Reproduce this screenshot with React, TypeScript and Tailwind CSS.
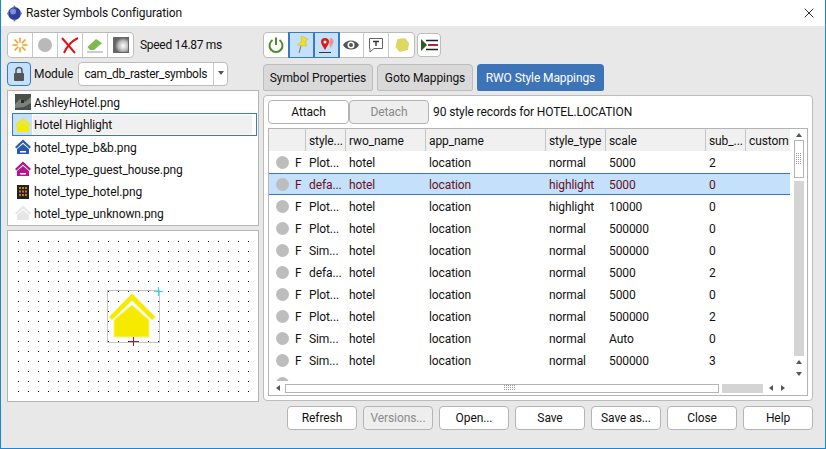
import { X } from "lucide-react";

const rows = [
  ["Plot...", "normal", "5000", "2"],
  ["defa...", "highlight", "5000", "0"],
  ["Plot...", "highlight", "10000", "0"],
  ["Plot...", "normal", "500000", "0"],
  ["Sim...", "normal", "500000", "0"],
  ["defa...", "normal", "5000", "2"],
  ["Plot...", "normal", "5000", "0"],
  ["Plot...", "normal", "500000", "2"],
  ["Sim...", "normal", "Auto", "0"],
  ["Sim...", "normal", "500000", "3"],
];

const columns = [
  { label: "", w: "w-[37px]" },
  { label: "style...", w: "w-[40px]" },
  { label: "rwo_name", w: "w-[80px]" },
  { label: "app_name", w: "w-[120px]" },
  { label: "style_type", w: "w-[60px]" },
  { label: "scale", w: "w-[100px]" },
  { label: "sub_...", w: "w-[40px]" },
  { label: "custom", w: "w-[43px]" },
];

function House({ body, inner }: { body: string; inner?: string }) {
  return (
    <svg width="18" height="18" viewBox="0 0 18 18">
      <path d="M9 1.500 L17 9 L15.500 10.500 L9 4.500 L2.500 10.500 L1 9 Z" fill={body} />
      <path d="M9 6 L15 11 V16 H3 V11 Z" fill={body} />
      {inner && <rect x="6" y="13" width="6" height="1.500" fill={inner} />}
    </svg>
  );
}

function ListRow({ icon, label, selected }: { icon: React.ReactNode; label: string; selected?: boolean }) {
  return (
    <div
      className={
        selected
          ? "flex h-[23px] items-center border border-[#3a78c2]"
          : "flex h-[22px] items-center border border-transparent"
      }
    >
      <div className={selected ? "flex h-full w-[19px] items-center justify-center bg-[#c4e0fa]" : "flex h-full w-[19px] items-center justify-center"}>
        {icon}
      </div>
      <div className={selected ? "ml-[1px] mr-[4px] flex h-[19px] flex-1 items-center bg-[#f0f0f0] pl-[1px]" : "ml-[1px] pl-[1px] pt-[1px]"}>{label}</div>
    </div>
  );
}

function ToolButton({ children, active }: { children: React.ReactNode; active?: boolean }) {
  return (
    <div
      className={
        active
          ? "flex h-full w-[25px] items-center justify-center border-x border-[#3a78c2] bg-[#c4e0fa] outline outline-[#3a78c2]"
          : "flex h-full w-[25px] items-center justify-center border-r border-[#c8c8c8] last:border-r-0"
      }
    >
      {children}
    </div>
  );
}

function FooterButton({ label, disabled }: { label: string; disabled?: boolean }) {
  return (
    <div
      className={
        disabled
          ? "flex h-[24px] w-[70px] items-center justify-center rounded-[4px] border border-[#b4b4b4] bg-[#eeeeee] text-[#8a8a8a]"
          : "flex h-[24px] w-[70px] items-center justify-center rounded-[4px] border border-[#b4b4b4] bg-white"
      }
    >
      {label}
    </div>
  );
}

function Arrow({ dir }: { dir: "up" | "down" | "left" | "right" }) {
  const d = {
    up: "M0 4 L3 0 L6 4 Z",
    down: "M0 0 L6 0 L3 4 Z",
    left: "M4 0 V6 L0 3 Z",
    right: "M0 0 V6 L4 3 Z",
  }[dir];
  return (
    <svg width="6" height="6" viewBox="0 0 6 6">
      <path d={d} fill="#555" />
    </svg>
  );
}

function Grip({ cols, rows: r }: { cols: number; rows: number }) {
  const dots = [];
  for (let x = 0; x < cols; x++) for (let y = 0; y < r; y++) dots.push(<rect key={x + "-" + y} x={x * 2} y={y * 2} width="1" height="1" fill="#9a9a9a" />);
  return (
    <svg width={cols * 2} height={r * 2}>
      {dots}
    </svg>
  );
}

function Preview() {
  const dots = [];
  for (let x = 18; x < 258; x += 10) for (let y = 241; y < 400; y += 10) dots.push(<rect key={x + "-" + y} x={x} y={y} width="1" height="1" fill="#000" />);
  return (
    <svg className="block" width="250" height="170" viewBox="8 231 250 170">
      {dots}
      <rect x="107.5" y="290.5" width="52" height="52" fill="none" stroke="#c4c4c4" />
      <path d="M132 293.5 L155.5 317 L152 320 L132 300.5 L112 320 L109 317 Z" fill="#f5ea00" />
      <path d="M132 305 L149 320 V337 H114 V320 Z" fill="#f5ea00" stroke="#faf27a" />
      <path d="M154 291.5 H163 M158.500 287 V296" stroke="#22dfe8" strokeWidth="1" />
      <path d="M129 341.5 H139 M133.500 337 V346" stroke="#a01c1c" strokeWidth="1" />
    </svg>
  );
}

export default function App() {
  return (
    <div className="flex h-[449px] w-[826px] flex-col overflow-hidden border-x border-b border-[#1a86d9] bg-[#e8e8e8] font-['Roboto',sans-serif] text-[12px] leading-none tracking-[-0.1px] text-[#111]">
      <div className="flex h-[26px] shrink-0 items-center bg-white pl-[5px] pr-[8px]">
        <svg width="17" height="17" viewBox="0 0 17 17">
          <circle cx="8.500" cy="8.500" r="6.500" fill="#2d3f9a" />
          <circle cx="7" cy="6.500" r="3" fill="#7d8ee0" />
          <circle cx="8.500" cy="1.500" r="1" fill="#777" />
          <circle cx="15" cy="8.500" r="1" fill="#777" />
          <circle cx="2" cy="8.500" r="1" fill="#777" />
          <circle cx="8.500" cy="15.500" r="1" fill="#777" />
        </svg>
        <span className="ml-[3px]">Raster Symbols Configuration</span>
        <X className="ml-auto" size={16} strokeWidth={1.3} />
      </div>

      <div className="flex flex-1 gap-[4px] pl-[6px] pr-[12px] pt-[6px]">
        <div className="flex w-[252px] flex-col">
          <div className="flex h-[26px] items-center">
            <div className="flex h-full items-center rounded-[4px] border border-[#bcbcbc] bg-white">
              <ToolButton>
                <svg width="16" height="16" viewBox="0 0 16 16">
                  <path d="M8 0.500 V15.500 M0.500 8 H15.500 M2.500 2.500 L13.500 13.500 M13.500 2.500 L2.500 13.500" stroke="#f59a23" strokeWidth="1.500" />
                  <circle cx="8" cy="8" r="2.500" fill="#fff" />
                </svg>
              </ToolButton>
              <ToolButton>
                <div className="h-[14px] w-[14px] rounded-full bg-[#b9b9b9]" />
              </ToolButton>
              <ToolButton>
                <svg width="20" height="20" viewBox="0 0 20 20">
                  <path d="M2 3 L15 18 M18 3 C12 6 7 11 4 18" stroke="#d9161c" strokeWidth="2" fill="none" />
                </svg>
              </ToolButton>
              <ToolButton>
                <svg width="18" height="18" viewBox="0 0 18 18">
                  <path d="M1.500 11 L10 3 L16 7 L8 14 H4 Z" fill="#7dbb4f" />
                  <path d="M1 16 H17" stroke="#999" />
                </svg>
              </ToolButton>
              <ToolButton>
                <svg width="16" height="16" viewBox="0 0 16 16">
                  <defs>
                    <radialGradient id="fade" cx="0.65" cy="0.55" r="0.55">
                      <stop offset="0" stopColor="#fff" />
                      <stop offset="0.6" stopColor="#bbb" />
                      <stop offset="1" stopColor="#666" />
                    </radialGradient>
                  </defs>
                  <rect x="0.500" y="0.500" width="15" height="15" fill="url(#fade)" stroke="#666" />
                </svg>
              </ToolButton>
            </div>
            <span className="ml-[6px] tracking-[-0.3px]">Speed 14.87 ms</span>
          </div>
          <div className="mt-[4px] flex h-[24px] items-center">
            <div className="flex h-full w-[24px] items-center justify-center rounded-[4px] border border-[#3a78c2] bg-[#c4e0fa]">
              <svg width="14" height="16" viewBox="0 0 14 16">
                <path d="M4 7 V4.500 a3 3 0 0 1 6 0 V7" fill="none" stroke="#555" strokeWidth="1.500" />
                <rect x="2" y="7" width="10" height="8" rx="1" fill="#555" />
              </svg>
            </div>
            <span className="ml-[3px]">Module</span>
            <div className="ml-[5px] flex h-full w-[150px] items-center rounded-[4px] border border-[#bcbcbc] bg-white">
              <span className="flex-1 pl-[5px] tracking-[-0.3px]">cam_db_raster_symbols</span>
              <div className="flex h-full w-[14px] items-center justify-center border-l border-[#c8c8c8]">
                <Arrow dir="down" />
              </div>
            </div>
          </div>
          <div className="mt-[4px] h-[136px] border border-[#b4b4b4] bg-white pl-[4px] pr-[1px]">
            <ListRow
              label="AshleyHotel.png"
              icon={
                <svg width="16" height="16" viewBox="0 0 16 16">
                  <rect width="16" height="16" fill="#4a4f48" />
                  <path d="M0 10 L5 5 L10 8 L16 3 V9 L9 13 L0 14 Z" fill="#7c8279" />
                  <rect x="6" y="6" width="3" height="3" fill="#2a2a2a" />
                </svg>
              }
            />
            <ListRow label="Hotel Highlight" selected icon={<House body="#f5ea00" />} />
            <ListRow label="hotel_type_b&b.png" icon={<House body="#2a5bab" inner="#fff" />} />
            <ListRow label="hotel_type_guest_house.png" icon={<House body="#b5128f" inner="#fff" />} />
            <ListRow
              label="hotel_type_hotel.png"
              icon={
                <svg width="14" height="16" viewBox="0 0 14 16">
                  <rect x="1" y="2" width="12" height="14" fill="#222" />
                  <path d="M3 4 h2 v2 h-2 z M6 4 h2 v2 h-2 z M9 4 h2 v2 h-2 z M3 7.500 h2 v2 h-2 z M6 7.500 h2 v2 h-2 z M9 7.500 h2 v2 h-2 z M3 11 h2 v2 h-2 z M6 11 h2 v2 h-2 z M9 11 h2 v2 h-2 z" fill="#c8761a" />
                </svg>
              }
            />
            <ListRow label="hotel_type_unknown.png" icon={<House body="#e6e6e6" />} />
          </div>
          <div className="mt-[4px] h-[172px] border border-[#b4b4b4] bg-white">
            <Preview />
          </div>
        </div>

        <div className="flex w-[550px] flex-col">
          <div className="flex h-[26px] items-center gap-[2px]">
            <div className="flex h-full items-center rounded-[4px] border border-[#bcbcbc] bg-white">
              <ToolButton>
                <svg width="18" height="18" viewBox="0 0 18 18">
                  <path d="M5.500 4 A6.500 6.500 0 1 0 12.500 4 M9 1.500 V9" fill="none" stroke="#4c8a2e" strokeWidth="2" />
                </svg>
              </ToolButton>
              <ToolButton active>
                <svg width="18" height="20" viewBox="0 0 18 20">
                  <path d="M8 1 L15 4 L12.500 6 L13.500 11 L4.500 10 L8.500 6.500 Z" fill="#eee02a" stroke="#c9bd1a" strokeWidth="0.600" />
                  <path d="M8 11 L6 18" stroke="#888" strokeWidth="1.200" />
                </svg>
              </ToolButton>
              <ToolButton active>
                <svg width="18" height="18" viewBox="0 0 18 18">
                  <path d="M12 2 a3.500 3.500 0 0 1 3 5.500 L12.500 12 L11 7 Z" fill="#f09090" />
                  <path d="M7 2 a4 4 0 0 1 4 4 c0 2 -3 6 -4 8 c-1 -2 -4 -6 -4 -8 a4 4 0 0 1 4 -4 Z" fill="#d81c1c" />
                  <circle cx="7" cy="6" r="1.500" fill="#fff" />
                  <path d="M1 16.500 H13" stroke="#333" />
                </svg>
              </ToolButton>
              <ToolButton>
                <svg width="18" height="14" viewBox="0 0 18 14">
                  <path d="M1 7 C4 1 14 1 17 7 C14 13 4 13 1 7 Z" fill="#555" />
                  <circle cx="9" cy="7" r="3.500" fill="#fff" />
                  <circle cx="9" cy="7" r="2" fill="#555" />
                </svg>
              </ToolButton>
              <ToolButton>
                <svg width="18" height="18" viewBox="0 0 18 18">
                  <path d="M2.500 2.500 H15.500 V12.500 H7 L3 16 V12.500 H2.500 Z" fill="#fff" stroke="#666" />
                  <path d="M6 5.500 H12 M9 5.500 V10" stroke="#333" strokeWidth="1.400" />
                </svg>
              </ToolButton>
              <ToolButton>
                <svg width="16" height="16" viewBox="0 0 16 16">
                  <path d="M3.500 2 L11 1 L15 6 L14 13 L5.500 15 L1.500 10 Z" fill="#dcd860" />
                </svg>
              </ToolButton>
            </div>
            <div className="flex h-[24px] w-[24px] items-center justify-center rounded-[4px] border border-[#bcbcbc] bg-white">
              <svg width="18" height="14" viewBox="0 0 18 14">
                <path d="M6 2.500 H18 M8 7 H18 M6 11.500 H18" stroke="#222" strokeWidth="1.400" />
                <path d="M9 7 H17" stroke="#c02020" strokeWidth="1.800" />
                <path d="M1 1 L7 7 L1 13 Z" fill="#2f5a24" />
              </svg>
            </div>
          </div>

          <div className="mt-[6px] flex h-[27px] gap-[4px]">
            <div className="flex w-[110px] items-center justify-center rounded-t-[4px] rounded-b-[2px] border border-[#bcbcbc] bg-[#d9d9d9]">Symbol Properties</div>
            <div className="flex w-[96px] items-center justify-center rounded-t-[4px] rounded-b-[2px] border border-[#bcbcbc] bg-[#d9d9d9]">Goto Mappings</div>
            <div className="flex w-[127px] items-center justify-center rounded-t-[4px] rounded-b-[2px] bg-[#3d74b8] text-white">RWO Style Mappings</div>
          </div>

          <div className="mt-[4px] flex h-[306px] flex-col rounded-[4px] border border-[#bcbcbc] bg-white px-[4px] pt-[4px]">
            <div className="flex h-[24px] shrink-0 items-center">
              <div className="flex h-full w-[81px] items-center justify-center rounded-[4px] border border-[#b4b4b4] bg-white">Attach</div>
              <div className="flex h-full w-[80px] items-center justify-center rounded-[4px] border border-[#b4b4b4] bg-[#eeeeee] text-[#8a8a8a]">Detach</div>
              <span className="ml-[4px]">90 style records for HOTEL.LOCATION</span>
            </div>

            <div className="mt-[4px] flex h-[268px] w-[540px] flex-col border border-[#b4b4b4] bg-white">
              <div className="flex min-h-0 flex-1">
                <div className="flex w-[521px] flex-col overflow-hidden">
                  <div className="flex h-[22px] shrink-0 bg-[#f0f0f0]">
                    {columns.map((c, i) => (
                      <div key={i} className={c.w + " flex shrink-0 items-center overflow-hidden whitespace-nowrap border-r border-[#c4c4c4] pl-[3px] pt-[1px] last:border-r-0"}>
                        {c.label}
                      </div>
                    ))}
                  </div>
                  {rows.map((r, i) => {
                    const selected = i === 1;
                    return (
                      <div
                        key={i}
                        className={
                          selected
                            ? "flex h-[22px] shrink-0 items-center border-y border-[#3a78c2] bg-[#c4e0fa] pt-[1px] text-[#6b1020]"
                            : "flex h-[22px] shrink-0 items-center pt-[1px]"
                        }
                      >
                        <div className="flex w-[37px] shrink-0 items-center pl-[7px]">
                          <div className="h-[13px] w-[13px] rounded-full bg-[#bdbdbd]" />
                          <span className="ml-[6px]">F</span>
                        </div>
                        <div className="w-[40px] shrink-0 pl-[3px]">{r[0]}</div>
                        <div className="w-[80px] shrink-0 pl-[3px]">hotel</div>
                        <div className="w-[120px] shrink-0 pl-[3px]">location</div>
                        <div className="w-[60px] shrink-0 pl-[3px]">{r[1]}</div>
                        <div className="w-[100px] shrink-0 pl-[3px]">{r[2]}</div>
                        <div className="w-[40px] shrink-0 pl-[3px]">{r[3]}</div>
                      </div>
                    );
                  })}
                  <div className="flex h-[10px] shrink-0 pl-[7px] pt-[6px]">
                    <div className="h-[13px] w-[13px] rounded-full bg-[#bdbdbd]" />
                  </div>
                </div>
                <div className="flex w-[17px] flex-col items-center pt-[4px]">
                  <Arrow dir="up" />
                  <div className="mt-[1px] flex h-[38px] w-[10px] shrink-0 items-center justify-center border border-[#b4b4b4] bg-white">
                    <Grip cols={3} rows={6} />
                  </div>
                  <div className="mt-[3px] w-[10px] flex-1 bg-[#d4d4d4]" />
                  <div className="mt-[4px]"><Arrow dir="up" /></div>
                  <div className="mb-[3px] mt-[6px]"><Arrow dir="down" /></div>
                </div>
              </div>
              <div className="flex h-[14px] shrink-0 items-center pl-[7px]">
                <Arrow dir="left" />
                <div className="ml-[3px] flex h-[9px] w-[434px] items-center justify-end border border-[#b4b4b4] bg-white pr-[202px]">
                  <Grip cols={6} rows={3} />
                </div>
                <div className="ml-[3px] h-[9px] w-[41px] bg-[#d4d4d4]" />
                <div className="ml-[6px]"><Arrow dir="left" /></div>
                <div className="ml-[6px]"><Arrow dir="right" /></div>
              </div>
            </div>
          </div>

          <div className="mt-[5px] flex justify-end gap-[6px]">
            <FooterButton label="Refresh" />
            <FooterButton label="Versions..." disabled />
            <FooterButton label="Open..." />
            <FooterButton label="Save" />
            <FooterButton label="Save as..." />
            <FooterButton label="Close" />
            <FooterButton label="Help" />
          </div>
        </div>
      </div>
    </div>
  );
}
